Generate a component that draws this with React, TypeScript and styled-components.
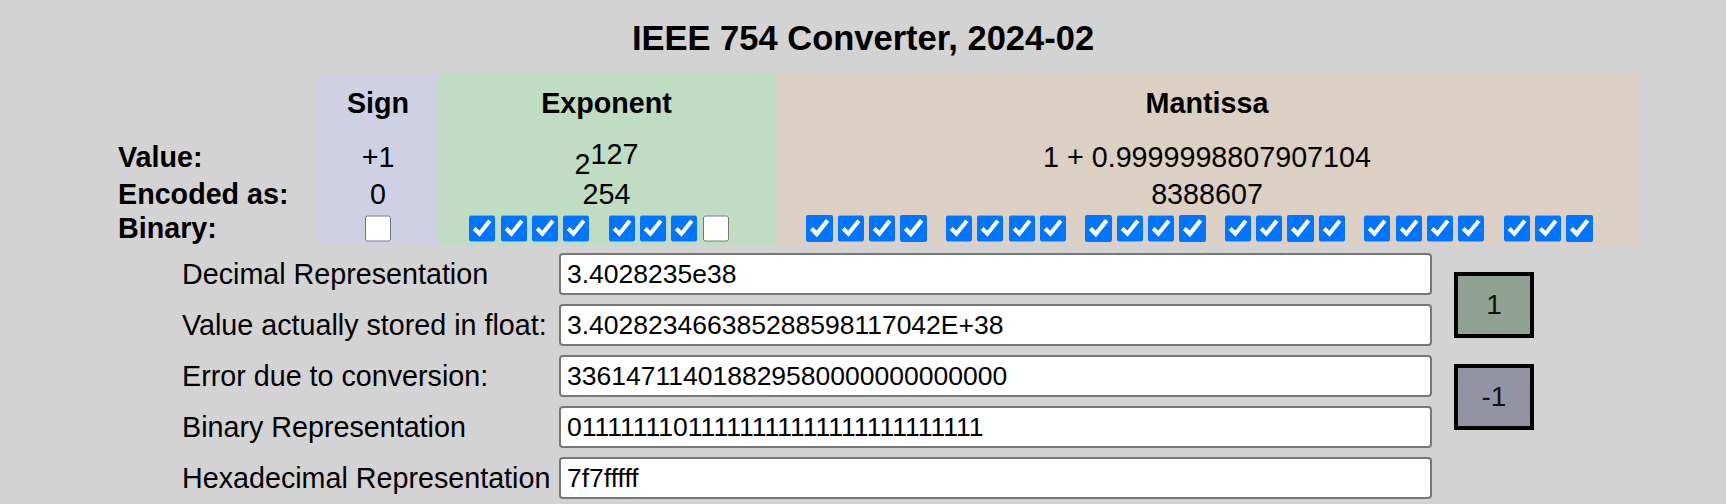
import * as React from 'react'
import styled, { createGlobalStyle } from 'styled-components'

const GlobalStyle = createGlobalStyle`
    body {
        margin: 0;
        background-color: #d3d3d3;
        font-family: "Liberation Sans", Arial, sans-serif;
        font-size: 28.7px;
        color: #000;
    }
`
const Page = styled.div`
    padding: 8px;
`
const Title = styled.h3`
    margin: 10px 0 15px;
    text-align: center;
    font-size: 34.5px;
    line-height: 40px;
    font-weight: bold;
`
const BitTable = styled.table`
    margin-left: 108px;
    border-collapse: collapse;
    border-spacing: 0;
    table-layout: fixed;
`
const Row = styled.tr<{ $h: number }>`
    height: ${p => p.$h}px;
`
const Head = styled.th<{ $bg?: string }>`
    background-color: ${p => p.$bg || 'transparent'};
    font-weight: bold;
    text-align: center;
    vertical-align: middle;
    padding: 0 0 5px;
`
const RowLabel = styled.th`
    text-align: left;
    font-weight: bold;
    padding: 0 2px;
    white-space: nowrap;
`
const Cell = styled.td<{ $bg: string; $drop?: boolean }>`
    background-color: ${p => p.$bg};
    text-align: center;
    vertical-align: middle;
    padding: ${p => (p.$drop ? '12px 0 0' : '0')};
    line-height: ${p => (p.$drop ? '26px' : 'normal')};
    white-space: nowrap;
`
const Sup = styled.sup`
    font-size: 28.7px;
    vertical-align: 10px;
    line-height: 0;
`
const Bits = styled.div<{ $pad: number }>`
    display: flex;
    justify-content: center;
    gap: 19.3px;
    padding-right: ${p => p.$pad}px;
`
const Group = styled.div`
    display: flex;
    gap: 5.05px;
`
const Box = styled.input`
    width: 26.25px;
    height: 26.25px;
    margin: 0;
`
const Form = styled.div`
    display: grid;
    grid-template-columns: 374px 873px 80px;
    grid-template-rows: repeat(5, 42px);
    column-gap: 3px;
    row-gap: 9px;
    margin: 7px 0 0 174px;
`
const FieldLabel = styled.label`
    align-self: center;
    white-space: nowrap;
`
const Field = styled.input`
    box-sizing: border-box;
    height: 42px;
    width: 873px;
    margin: 0;
    padding: 0 6px;
    border: 2px solid #767676;
    border-radius: 4px;
    background: #fff;
    font-family: "Liberation Sans", Arial, sans-serif;
    font-size: 26.5px;
    color: #000;
`
const Buttons = styled.div`
    grid-column: 3;
    grid-row: 1 / span 5;
    display: flex;
    flex-direction: column;
    gap: 26px;
    padding-top: 19px;
    margin-left: 19px;
`
const StepButton = styled.button<{ $bg: string }>`
    box-sizing: border-box;
    width: 80px;
    height: 66px;
    border: 4px solid #000;
    background-color: ${p => p.$bg};
    font-family: "Liberation Sans", Arial, sans-serif;
    font-size: 28px;
    color: #111;
    padding: 0;
`

const SIGN = '#d0d0e4'
const EXP = '#c0dcc2'
const MANT = '#dcd0c4'

const bits = '01111111011111111111111111111111'

const groupBits = (s: string) => {
    const out: string[] = []
    for (let i = 0; i < s.length; i += 4) out.push(s.slice(i, i + 4))
    return out
}

const BitBoxes = ({ value, pad }: { value: string; pad: number }) => (
    <Bits $pad={pad}>
        {groupBits(value).map((g, gi) => (
            <Group key={gi}>
                {g.split('').map((b, i) => (
                    <Box key={i} type="checkbox" checked={b === '1'} onChange={() => {}} />
                ))}
            </Group>
        ))}
    </Bits>
)

const fields = [
    ['Decimal Representation', '3.4028235e38'],
    ['Value actually stored in float:', '3.402823466385288598117042E+38'],
    ['Error due to conversion:', '336147114018829580000000000000'],
    ['Binary Representation', bits],
    ['Hexadecimal Representation', '7f7fffff'],
]

export default function App() {
    return (
        <Page>
            <GlobalStyle />
            <Title>IEEE 754 Converter, 2024-02</Title>
            <BitTable>
                <colgroup>
                    <col style={{ width: 202 }} />
                    <col style={{ width: 120 }} />
                    <col style={{ width: 337 }} />
                    <col style={{ width: 864 }} />
                </colgroup>
                <tbody>
                    <Row $h={65}>
                        <Head />
                        <Head $bg={SIGN}>Sign</Head>
                        <Head $bg={EXP}>Exponent</Head>
                        <Head $bg={MANT}>Mantissa</Head>
                    </Row>
                    <Row $h={39}>
                        <RowLabel>Value:</RowLabel>
                        <Cell $bg={SIGN}>+1</Cell>
                        <Cell $bg={EXP} $drop>2<Sup>127</Sup></Cell>
                        <Cell $bg={MANT}>1 + 0.9999998807907104</Cell>
                    </Row>
                    <Row $h={34}>
                        <RowLabel>Encoded as:</RowLabel>
                        <Cell $bg={SIGN}>0</Cell>
                        <Cell $bg={EXP}>254</Cell>
                        <Cell $bg={MANT}>8388607</Cell>
                    </Row>
                    <Row $h={35}>
                        <RowLabel>Binary:</RowLabel>
                        <Cell $bg={SIGN}><BitBoxes value={bits.slice(0, 1)} pad={0} /></Cell>
                        <Cell $bg={EXP}><BitBoxes value={bits.slice(1, 9)} pad={15} /></Cell>
                        <Cell $bg={MANT}><BitBoxes value={bits.slice(9)} pad={15} /></Cell>
                    </Row>
                </tbody>
            </BitTable>
            <Form>
                {fields.map(([label, value]) => (
                    <React.Fragment key={label}>
                        <FieldLabel>{label}</FieldLabel>
                        <Field type="text" value={value} readOnly />
                    </React.Fragment>
                ))}
                <Buttons>
                    <StepButton $bg="#8fa293">1</StepButton>
                    <StepButton $bg="#9393a3">-1</StepButton>
                </Buttons>
            </Form>
        </Page>
    )
}
